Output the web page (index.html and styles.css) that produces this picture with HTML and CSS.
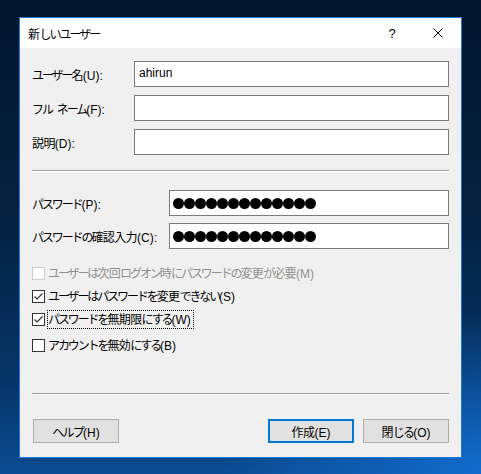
FILE: index.html
```html
<!DOCTYPE html>
<html lang="ja">
<head>
<meta charset="utf-8">
<title>新しいユーザー</title>
<link rel="stylesheet" href="styles.css">
</head>
<body>
<div class="window">
  <div class="titlebar">
    <span class="title"><span class="kj">新</span>しいユーザー</span>
    <div class="tb-buttons">
      <span class="tb-btn help">?</span>
      <span class="tb-btn close">
        <svg width="10" height="10" viewBox="0 0 10 10"><path d="M0.5 0.5 L9.5 9.5 M9.5 0.5 L0.5 9.5" stroke="#000" stroke-width="1" fill="none"/></svg>
      </span>
    </div>
  </div>
  <div class="content">
    <div class="form-grid names">
      <label class="lbl">ユーザー<span class="kj">名</span><span class="mn">(U):</span></label>
      <div class="field"><span class="val">ahirun</span></div>
      <label class="lbl">フル<span class="sp"></span>ネーム<span class="mn">(F):</span></label>
      <div class="field"></div>
      <label class="lbl"><span class="kj">説明</span><span class="mn">(D):</span></label>
      <div class="field"></div>
    </div>
    <div class="sep"></div>
    <div class="form-grid pw">
      <label class="lbl">パスワード<span class="mn">(P):</span></label>
      <div class="field dots"><i></i><i></i><i></i><i></i><i></i><i></i><i></i><i></i><i></i><i></i><i></i><i></i><i></i></div>
      <label class="lbl">パスワードの<span class="kj">確認入力</span><span class="mn">(C):</span></label>
      <div class="field dots"><i></i><i></i><i></i><i></i><i></i><i></i><i></i><i></i><i></i><i></i><i></i><i></i><i></i></div>
    </div>
    <div class="checks">
      <div class="chk disabled"><span class="box"></span><span class="ctext">ユーザーは<span class="kj">次回</span>ログオン<span class="kj">時</span>にパスワードの<span class="kj">変更</span>が<span class="kj">必要</span><span class="mn">(M)</span></span></div>
      <div class="chk"><span class="box"><svg width="11" height="11" viewBox="0 0 11 11"><path d="M1.5 5.5 L4 8 L9.5 2.5" stroke="#333" stroke-width="1.2" fill="none"/></svg></span><span class="ctext">ユーザーはパスワードを<span class="kj">変更</span>できない<span class="mn">(S)</span></span></div>
      <div class="chk"><span class="box"><svg width="11" height="11" viewBox="0 0 11 11"><path d="M1.5 5.5 L4 8 L9.5 2.5" stroke="#333" stroke-width="1.2" fill="none"/></svg></span><span class="ctext focus">パスワードを<span class="kj">無期限</span>にする<span class="mn">(W)</span></span></div>
      <div class="chk last"><span class="box"></span><span class="ctext">アカウントを<span class="kj">無効</span>にする<span class="mn">(B)</span></span></div>
    </div>
    <div class="sep bottom"></div>
    <div class="buttons">
      <button class="btn">ヘルプ<span class="mn">(H)</span></button>
      <div class="spacer"></div>
      <button class="btn default"><span class="kj">作成</span><span class="mn">(E)</span></button>
      <button class="btn"><span class="kj">閉</span>じる<span class="mn">(O)</span></button>
    </div>
  </div>
</div>
</body>
</html>
```

FILE: styles.css
```css
html, body {
  margin: 0;
  padding: 0;
  width: 481px;
  height: 474px;
  overflow: hidden;
}
body {
  background:
    radial-gradient(ellipse 260px 160px at 480px 474px, rgba(18, 110, 210, 0.9), rgba(18, 110, 210, 0) 100%),
    linear-gradient(to bottom, #03162d 0%, #04213f 45%, #063466 80%, #0b4c92 100%);
  font-family: "Noto Sans CJK JP", "Noto Sans", sans-serif;
  font-size: 12px;
  color: #000;
}
.window {
  margin: 17px 0 0 19px;
  width: 441px;
  height: 439px;
  border: 1px solid #1c7ad4;
  background: #f0f0f0;
  display: flex;
  flex-direction: column;
}
.titlebar {
  height: 30px;
  background: #fff;
  display: flex;
  align-items: center;
}
.title {
  margin-left: 8px;
  letter-spacing: -2px;
  font-size: 12px;
}
.tb-buttons {
  margin-left: auto;
  display: flex;
  height: 30px;
}
.tb-btn {
  width: 46px;
  height: 30px;
  display: flex;
  align-items: center;
  justify-content: center;
}
.help {
  font-family: "Liberation Sans", sans-serif;
  font-size: 13px;
  padding-top: 1px;
  box-sizing: border-box;
}
.mn {
  font-family: "Liberation Sans", sans-serif;
  letter-spacing: 0;
  font-size: 12px;
}
.kj { letter-spacing: -0.6px; }
.sp { display: inline-block; width: 5px; }
.content {
  padding: 13px 12px 0 12px;
  display: flex;
  flex-direction: column;
  flex: 1;
}
.form-grid {
  display: grid;
  row-gap: 8px;
  align-items: center;
}
.names { grid-template-columns: 102px 1fr; }
.pw { grid-template-columns: 137px 1fr; row-gap: 7px; margin-top: 18px; }
.lbl {
  letter-spacing: -2.1px;
  white-space: nowrap;
}
.field {
  height: 26px;
  box-sizing: border-box;
  border: 1px solid #7a7a7a;
  background: #fff;
  display: flex;
  align-items: center;
  padding-left: 4px;
}
.val {
  font-family: "Liberation Sans", sans-serif;
  font-size: 12px;
  padding-bottom: 3px;
}
.dots { padding-left: 3px; }
.dots i {
  display: block;
  width: 11px;
  height: 11px;
  border-radius: 50%;
  background: #000;
}
.sep {
  height: 1px;
  background: #a0a0a0;
  border-bottom: 1px solid #fff;
  margin-top: 15px;
}
.checks {
  margin-top: 16px;
  display: flex;
  flex-direction: column;
  gap: 6px;
}
.chk {
  display: flex;
  align-items: center;
  height: 17px;
}
.chk.last { margin-top: 3px; }
.box {
  width: 13px;
  height: 13px;
  box-sizing: border-box;
  border: 1px solid #333;
  background: #fff;
  display: flex;
  align-items: center;
  justify-content: center;
  margin-right: 3px;
}
.ctext {
  letter-spacing: -2.1px;
  white-space: nowrap;
  line-height: 16px;
  padding-right: 2px;
}
.disabled .box { border-color: #cccccc; }
.disabled .ctext { color: #8f8f8f; }
.focus { outline: 1px dotted #000; }
.sep.bottom { margin-top: 39px; }
.buttons {
  display: flex;
  margin-top: 24px;
  gap: 8px;
}
.spacer { flex: 1; }
.btn {
  width: 86px;
  height: 24px;
  box-sizing: border-box;
  border: 1px solid #adadad;
  background: #e1e1e1;
  font-family: "Noto Sans CJK JP", sans-serif;
  font-size: 12px;
  letter-spacing: -1.8px;
  padding: 0;
  margin: 0;
  color: #000;
  margin-left: 1px;
}
.btn.default { border: 2px solid #0078d7; margin-right: 0; }
```
